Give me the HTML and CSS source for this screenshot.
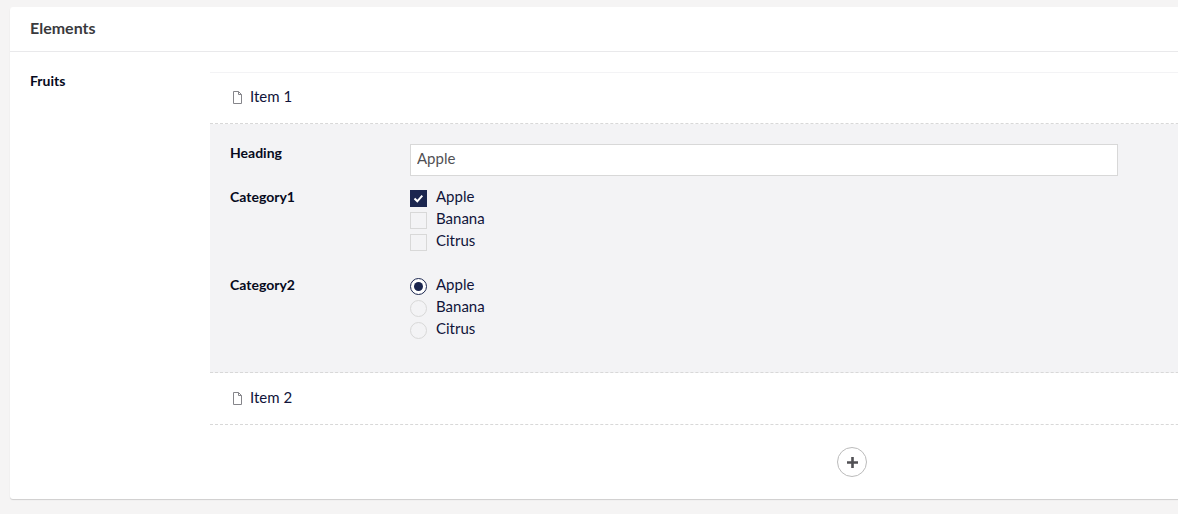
FILE: index.html
```html
<!DOCTYPE html>
<html lang="en">
<head>
  <meta charset="UTF-8">
  <meta name="viewport" content="width=device-width, initial-scale=1.0">
  <title>Elements</title>
  <link rel="stylesheet" href="styles.css">
</head>
<body>
  <div class="card">
    <div class="card-header">Elements</div>
    <div class="card-body">
      <div class="field-label">Fruits</div>
      <div class="items">
        <div class="item-head">
          <svg class="doc-icon" width="11" height="14" viewBox="0 0 11 14"><path d="M1.5 1.5h5l3 3v9h-8z M6.5 1.5v3h3" fill="#fff" stroke="#85858a" stroke-width="1"/></svg>
          <span>Item 1</span>
        </div>
        <div class="item-panel">
          <div class="row row-heading">
            <div class="row-label">Heading</div>
            <input class="text-input" type="text" value="Apple">
          </div>
          <div class="row row-checks">
            <div class="row-label">Category1</div>
            <div class="options">
              <div class="option">
                <span class="check checked">
                  <svg width="11" height="9" viewBox="0 0 11 9"><path d="M1.5 4.5l2.8 2.8 5-5.6" fill="none" stroke="#fff" stroke-width="2"/></svg>
                </span>
                Apple
              </div>
              <div class="option"><span class="check"></span>Banana</div>
              <div class="option"><span class="check"></span>Citrus</div>
            </div>
          </div>
          <div class="row">
            <div class="row-label">Category2</div>
            <div class="options">
              <div class="option"><span class="radio checked"></span>Apple</div>
              <div class="option"><span class="radio"></span>Banana</div>
              <div class="option"><span class="radio"></span>Citrus</div>
            </div>
          </div>
        </div>
        <div class="item-head item-last">
          <svg class="doc-icon" width="11" height="14" viewBox="0 0 11 14"><path d="M1.5 1.5h5l3 3v9h-8z M6.5 1.5v3h3" fill="#fff" stroke="#85858a" stroke-width="1"/></svg>
          <span>Item 2</span>
        </div>
        <div class="add-row">
          <button class="add-button" type="button" aria-label="Add">
            <svg width="11" height="11" viewBox="0 0 11 11"><path d="M5.5 0v11M0 5.5h11" fill="none" stroke="#515054" stroke-width="2.6"/></svg>
          </button>
        </div>
      </div>
    </div>
  </div>
</body>
</html>
```

FILE: styles.css
```css
html, body {
  height: 100%;
}
body {
  margin: 0;
  overflow: hidden;
  background-color: #f5f4f4;
  font-family: Lato, "Open Sans", sans-serif;
  font-size: 15px;
  line-height: 20px;
  color: #10143a;
}
.card {
  box-sizing: border-box;
  width: 1504px;
  height: 492px;
  margin: 7px 0 0 10px;
  background-color: white;
  border-radius: 3px;
  box-shadow: 0 1px 1px rgba(0, 0, 0, 0.16);
}
.card-header {
  height: 44px;
  padding-left: 20px;
  border-bottom: 1px solid #e9e9eb;
  font-size: 16px;
  font-weight: 700;
  line-height: 41px;
  color: #3a3a3d;
}
.card-body {
  display: flex;
  padding: 20px 20px 0 20px;
}
.field-label, .row-label {
  font-size: 14px;
  font-weight: 700;
  color: #060a20;
}
.field-label {
  width: 180px;
  flex-shrink: 0;
  line-height: 18px;
}
.items {
  flex: 1;
  border-top: 1px solid #f3f3f5;
}
.item-head {
  display: flex;
  align-items: center;
  gap: 7px;
  height: 46px;
  padding-left: 22px;
  padding-bottom: 4px;
  border-bottom: 1px dashed #d8d8d8;
}
.item-last {
  height: 47px;
}
.doc-icon {
  display: block;
  margin-top: 2px;
}
.item-panel {
  box-sizing: border-box;
  height: 249px;
  padding: 20px;
  background-color: #f3f3f5;
  border-bottom: 1px dashed #d8d8d8;
}
.row {
  display: flex;
}
.row-label {
  width: 180px;
  flex-shrink: 0;
}
.row-heading {
  margin-bottom: 11px;
}
.row-heading .row-label {
  line-height: 18px;
}
.row-checks {
  margin-bottom: 24px;
}
.text-input {
  box-sizing: border-box;
  width: 708px;
  height: 32px;
  padding: 0 6px 4px;
  border: 1px solid #d8d8d8;
  border-radius: 0;
  outline: none;
  background-color: white;
  font-family: inherit;
  font-size: 15px;
  color: #515054;
}
.options {
  display: flex;
  flex-direction: column;
  margin-top: -2px;
}
.option {
  display: flex;
  align-items: flex-start;
  gap: 9px;
  height: 22px;
  line-height: 22px;
}
.check, .radio {
  box-sizing: border-box;
  display: flex;
  align-items: center;
  justify-content: center;
  width: 17px;
  height: 17px;
  margin-top: 5px;
  border: 1px solid #d8d8d8;
  background-color: #f3f3f5;
}
.check.checked {
  background-color: #1b264f;
  border-color: #1b264f;
}
.radio {
  border-radius: 50%;
}
.radio.checked {
  border: 1.5px solid #1b264f;
  background-color: white;
}
.radio.checked::after {
  content: "";
  width: 9px;
  height: 9px;
  border-radius: 50%;
  background-color: #1b264f;
}
.add-row {
  display: flex;
  justify-content: center;
  padding-top: 22px;
}
.add-button {
  box-sizing: border-box;
  display: flex;
  align-items: center;
  justify-content: center;
  width: 30px;
  height: 30px;
  padding: 0;
  border: 1px solid #bbb;
  border-radius: 50%;
  background-color: white;
}
```
